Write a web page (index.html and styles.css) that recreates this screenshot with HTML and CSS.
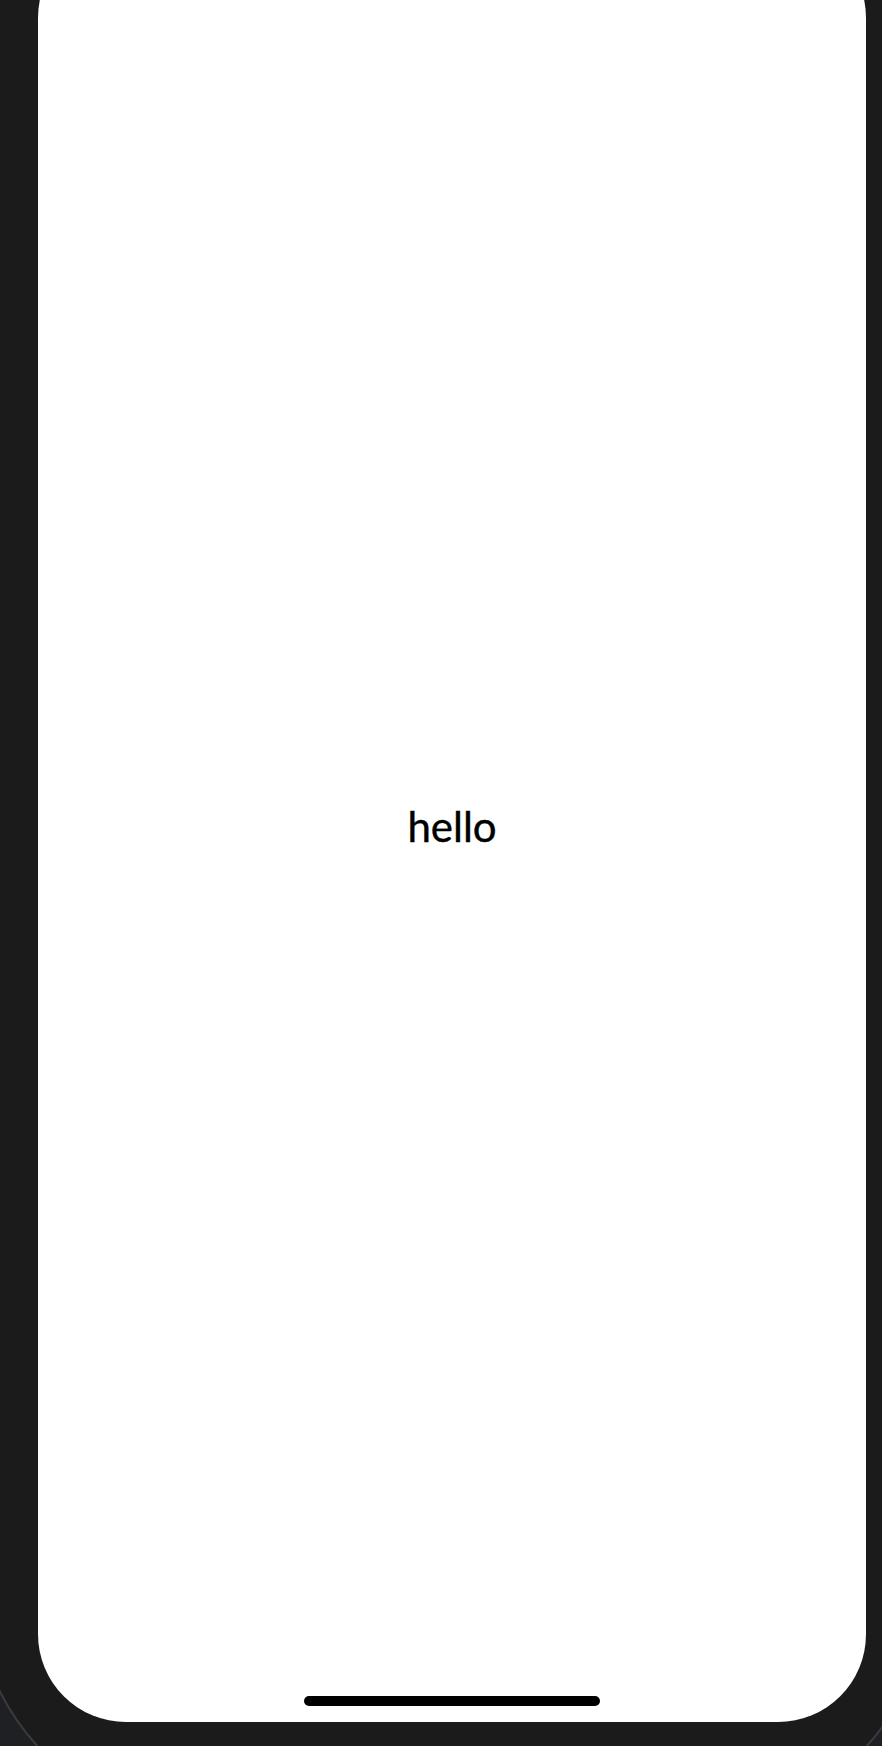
FILE: index.html
```html
<!DOCTYPE html>
<html lang="en">
<head>
<meta charset="utf-8">
<title>hello</title>
<link rel="stylesheet" href="styles.css">
</head>
<body>
  <div class="device">
    <div class="screen">
      <div class="content">
        <span class="greeting">hello</span>
      </div>
      <div class="home-bar"></div>
    </div>
  </div>
</body>
</html>
```

FILE: styles.css
```css
html {
  background: #1e2024;
}

body {
  margin: 0;
  height: 100vh;
  overflow: hidden;
}

.device {
  box-sizing: border-box;
  width: 960px;
  margin-left: -28px;
  margin-top: -200px;
  padding: 128px 64px 105px;
  background: #1b1b1b;
  border: 2px solid #3b3b3d;
  border-radius: 250px;
}

.screen {
  width: 828px;
  height: 1792px;
  background: #ffffff;
  border-radius: 88px;
  display: flex;
  flex-direction: column;
}

.content {
  flex: 1;
  display: flex;
  align-items: center;
  justify-content: center;
  padding-top: 26px;
}

.greeting {
  font-family: "Lato", "Noto Sans", sans-serif;
  font-size: 42px;
  line-height: 1;
  color: #000000;
  -webkit-text-stroke: 0.4px #000000;
}

.home-bar {
  width: 296px;
  height: 10px;
  margin: 0 auto 16px;
  background: #000000;
  border-radius: 5px;
}
```
